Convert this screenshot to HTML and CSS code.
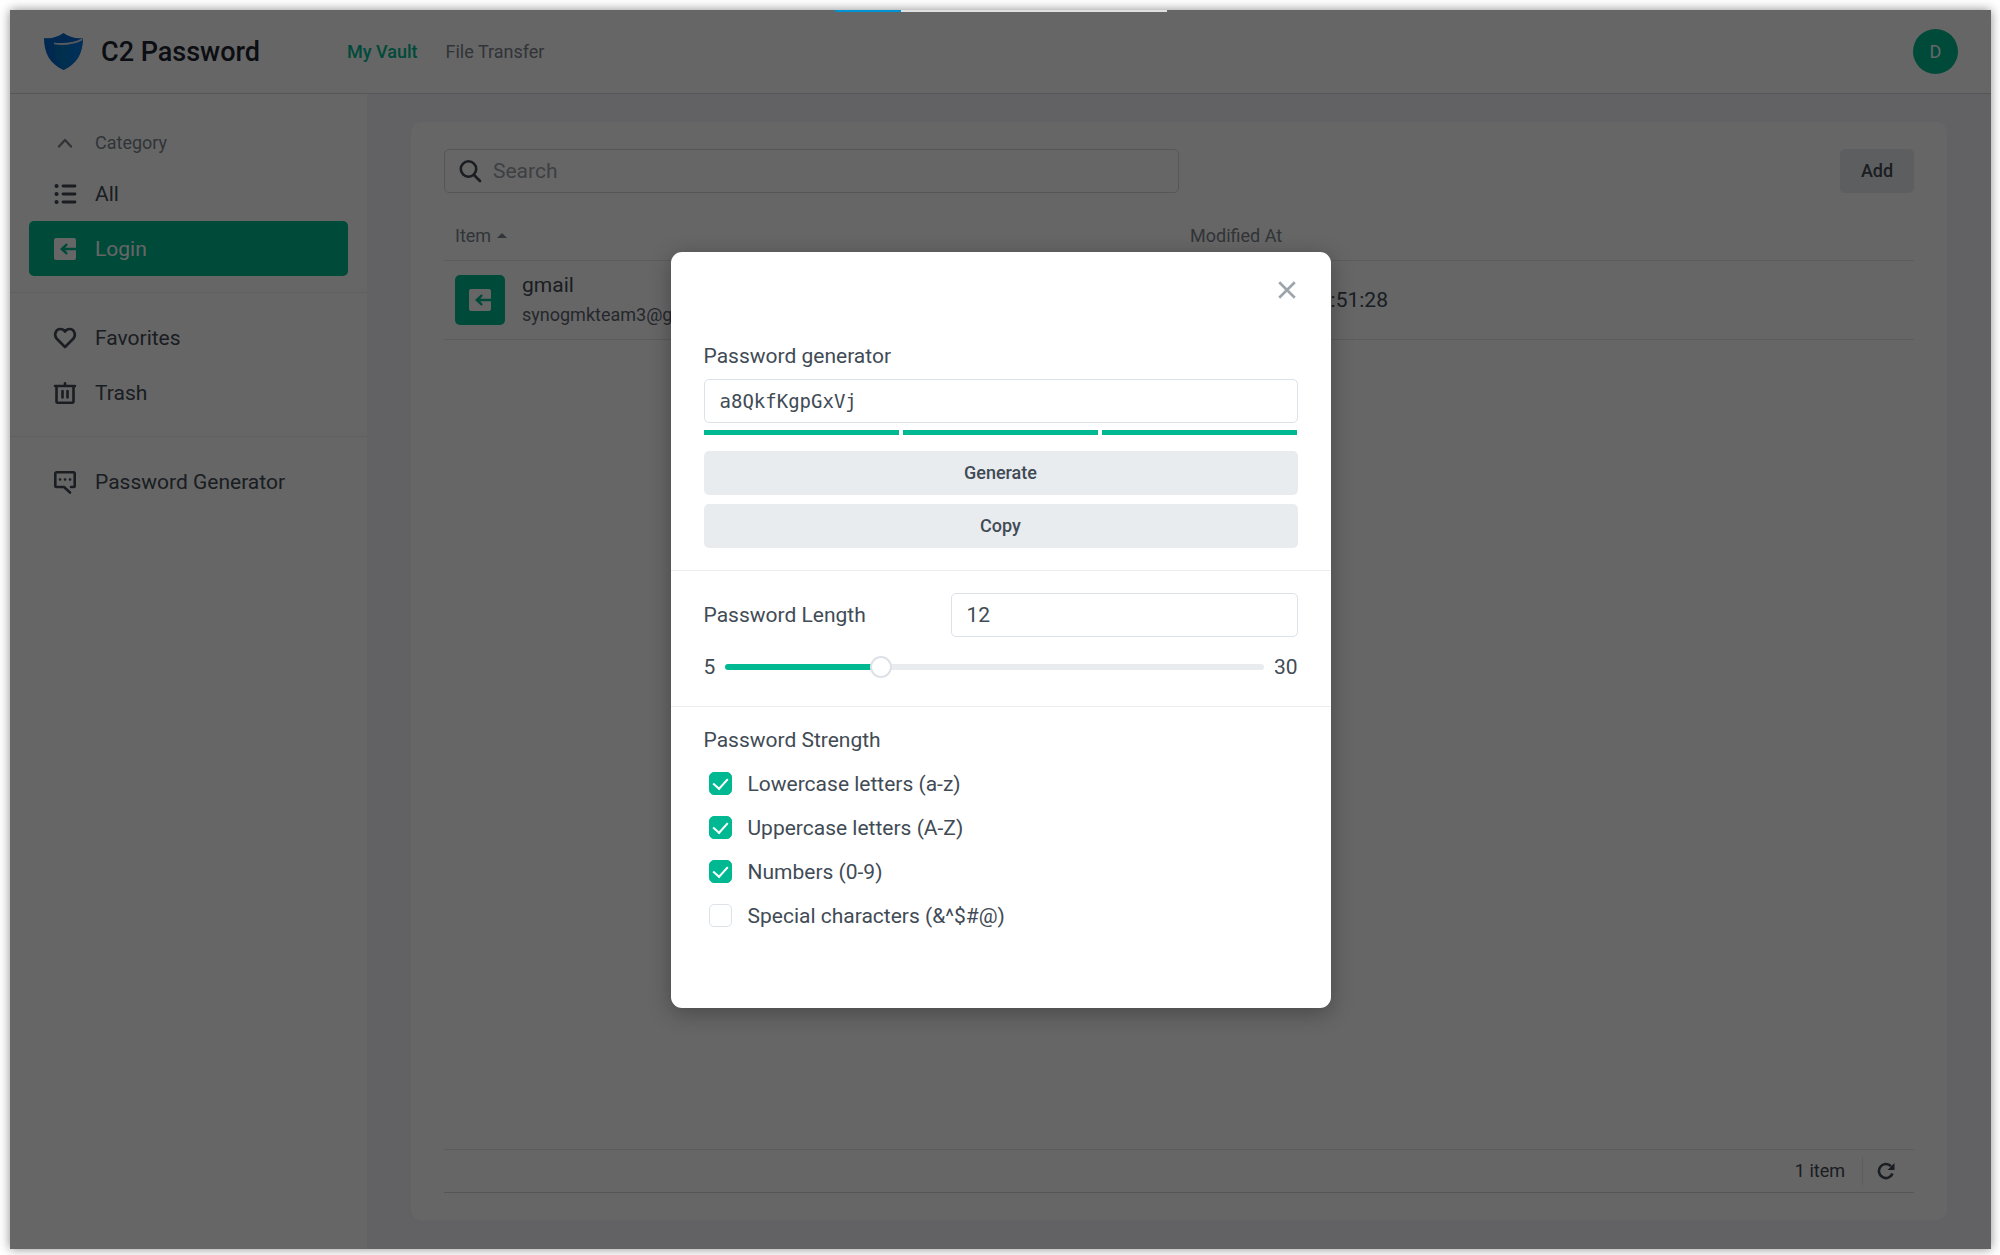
FILE: index.html
```html
<!DOCTYPE html>
<html lang="en">
<head>
    <meta charset="UTF-8">
    <meta name="viewport" content="width=device-width, initial-scale=1.0">
    <title>C2 Password</title>
    <link rel="stylesheet" href="styles.css">
</head>
<body>
    <svg class="sprite" aria-hidden="true">
        <symbol id="login-icon" viewBox="0 0 22 22">
            <path fill="currentColor" d="M2 0h18a2 2 0 0 1 2 2v7.800H11.200l2-2.200a1.200 1.200 0 0 0-1.800-1.700L6 11l5.400 5.100a1.200 1.200 0 0 0 1.800-1.700l-2-2.200H22V20a2 2 0 0 1-2 2H2a2 2 0 0 1-2-2V2a2 2 0 0 1 2-2z"/>
        </symbol>
    </svg>

    <div class="window">
        <header class="header">
            <svg class="logo" viewBox="0 0 39 37" aria-hidden="true">
                <defs>
                    <linearGradient id="shield" x1="0" y1="0" x2="1" y2="0">
                        <stop offset="0" stop-color="#0074b8"/>
                        <stop offset="1" stop-color="#0078e6"/>
                    </linearGradient>
                </defs>
                <path fill="#0064c8" d="M0 5c7 1 14-1 19.500-5C25 4 32 6 39 5c0 15-6 26-19.500 32C6 31 0 20 0 5z"/>
                <path fill="url(#shield)" d="M10 11.500c11 1 20 0 28.500-3.500C37.500 21 32 31 19.500 37 13 30 10 22 10 11.500z"/>
                <path fill="#d5e4f2" d="M10 9.800c11 .8 20 0 28.800-4.800L38 7.500c-8 4-18 5.300-28 3.800z"/>
            </svg>
            <h1>C2 Password</h1>
            <nav class="tabs">
                <a class="tab active" href="#">My Vault</a>
                <a class="tab" href="#">File Transfer</a>
            </nav>
            <button class="avatar" type="button">D</button>
        </header>

        <div class="layout">
            <aside class="sidebar">
                <button class="category" type="button">
                    <svg class="icon" viewBox="0 0 22 22" aria-hidden="true"><path d="M5 14.500L11 8l6 6.500" stroke-width="2.400"/></svg>
                    Category
                </button>
                <nav class="menu">
                    <a class="menu-item" href="#">
                        <svg class="icon" viewBox="0 0 22 22" aria-hidden="true"><path d="M9 3h12M9 11h12M9 19h12" stroke-width="2.800"/><path d="M2.500 3h.1M2.500 11h.1M2.500 19h.1" stroke-width="4"/></svg>
                        All
                    </a>
                    <a class="menu-item selected" href="#">
                        <svg class="icon" aria-hidden="true"><use href="#login-icon"/></svg>
                        Login
                    </a>
                </nav>
                <nav class="menu">
                    <a class="menu-item" href="#">
                        <svg class="icon" viewBox="0 0 22 22" aria-hidden="true"><path d="M11 20L2.500 11.500C-.5 7.500 2 2 6.300 2 8.500 2 10 3 11 4.600 12 3 13.500 2 15.700 2 20 2 22.500 7.500 19.500 11.500z"/></svg>
                        Favorites
                    </a>
                    <a class="menu-item" href="#">
                        <svg class="icon" viewBox="0 0 22 22" aria-hidden="true"><path d="M1 4h20M11 1.200V4M2.500 4v15.500a1.200 1.200 0 0 0 1.200 1.200h14.600a1.200 1.200 0 0 0 1.200-1.200V4M8.500 9v6.500M13.500 9v6.500"/></svg>
                        Trash
                    </a>
                </nav>
                <nav class="menu">
                    <a class="menu-item" href="#">
                        <svg class="icon" viewBox="0 0 22 22" aria-hidden="true"><path d="M17 16h2.500a1.200 1.200 0 0 0 1.200-1.200V2.500a1.200 1.200 0 0 0-1.200-1.200h-17a1.200 1.200 0 0 0-1.200 1.200v12.300A1.200 1.200 0 0 0 2.500 16H10l6 5.500"/><path d="M6 8.500h.1M11 8.500h.1M16 8.500h.1"/></svg>
                        Password Generator
                    </a>
                </nav>
            </aside>

            <main class="main">
                <section class="card">
                    <div class="toolbar">
                        <label class="search">
                            <svg class="icon" viewBox="0 0 22 22" aria-hidden="true"><circle cx="9.500" cy="9" r="7.700"/><path d="M15 15l6 6"/></svg>
                            <input type="text" placeholder="Search" aria-label="Search">
                        </label>
                        <button class="button add" type="button">Add</button>
                    </div>
                    <div class="items">
                        <table>
                            <thead>
                                <tr>
                                    <th>Item <span class="sort"></span></th>
                                    <th>Modified At</th>
                                </tr>
                            </thead>
                            <tbody>
                                <tr>
                                    <td>
                                        <div class="entry">
                                            <span class="entry-icon"><svg class="icon" aria-hidden="true"><use href="#login-icon"/></svg></span>
                                            <div>
                                                <div class="entry-name">gmail</div>
                                                <div class="entry-user">synogmkteam3@gmail.com</div>
                                            </div>
                                        </div>
                                    </td>
                                    <td>2021/07/06 14:51:28</td>
                                </tr>
                            </tbody>
                        </table>
                    </div>
                    <footer class="status">
                        <span class="count">1 item</span>
                        <button class="refresh" type="button" aria-label="Refresh">
                            <svg viewBox="0 0 18 18" aria-hidden="true"><path d="M15.500 11.500A7 7 0 1 1 14 4.200" fill="none" stroke="currentColor" stroke-width="2.600"/><path d="M17.500 1v7h-7z" fill="currentColor"/></svg>
                        </button>
                    </footer>
                </section>
            </main>
        </div>

        <div class="overlay">
            <form class="modal" role="dialog" aria-label="Password generator">
                <button class="close" type="button" aria-label="Close">
                    <svg viewBox="0 0 18 18" aria-hidden="true"><path d="M2 2l14 14M16 2L2 16"/></svg>
                </button>
                <section class="modal-section generator">
                    <label for="password">Password generator</label>
                    <input class="field mono" type="text" id="password" value="a8QkfKgpGxVj" spellcheck="false">
                    <div class="meter"><span></span><span></span><span></span></div>
                    <button class="button" type="button">Generate</button>
                    <button class="button" type="button">Copy</button>
                </section>
                <section class="modal-section length">
                    <div class="length-row">
                        <label for="length">Password Length</label>
                        <input class="field" type="text" id="length" value="12">
                    </div>
                    <div class="slider-row">
                        <span>5</span>
                        <input class="slider" type="range" min="5" max="30" value="12" aria-label="Password Length" style="--fill: 29%">
                        <span>30</span>
                    </div>
                </section>
                <section class="modal-section strength">
                    <h2>Password Strength</h2>
                    <label class="option"><input type="checkbox" checked> Lowercase letters (a-z)</label>
                    <label class="option"><input type="checkbox" checked> Uppercase letters (A-Z)</label>
                    <label class="option"><input type="checkbox" checked> Numbers (0-9)</label>
                    <label class="option"><input type="checkbox"> Special characters (&amp;^$#@)</label>
                </section>
            </form>
        </div>

        <div class="loading"></div>
    </div>
</body>
</html>
```

FILE: styles.css
```css
* {
    box-sizing: border-box;
}
body {
    margin: 0;
    height: 100vh;
    padding: 10px 9px 6px 10px;
    display: flex;
    background: #fff;
    color: #414b55;
    font-family: Roboto, sans-serif;
    font-size: 21px;
    line-height: 28px;
}
h1, h2 {
    margin: 0;
}
a {
    color: inherit;
    text-decoration: none;
}
button, input {
    font: inherit;
    color: inherit;
}
button {
    border: none;
    background: none;
    padding: 0;
    cursor: pointer;
}
.sprite {
    position: absolute;
    width: 0;
    height: 0;
}
.window {
    position: relative;
    flex: 1;
    display: flex;
    flex-direction: column;
    min-width: 0;
    background: #fff;
    box-shadow: 0 0 10px rgba(0, 0, 0, 0.45);
}
.icon {
    width: 22px;
    height: 22px;
    flex: none;
    fill: none;
    stroke: currentColor;
    stroke-width: 2.6;
    stroke-linecap: round;
    stroke-linejoin: round;
    overflow: visible;
}
.icon use {
    stroke: none;
}

/* header */
.header {
    display: flex;
    align-items: center;
    height: 84px;
    padding: 0 33px 0 34px;
    border-bottom: 1px solid #d2d7dd;
}
.logo {
    width: 39px;
    height: 37px;
}
.header h1 {
    margin-left: 18px;
    color: #1c2530;
    font-size: 27px;
    font-weight: 500;
}
.tabs {
    display: flex;
    gap: 28px;
    margin-left: 87px;
    font-size: 18px;
    color: #7b838c;
}
.tab.active {
    color: #00b992;
    font-weight: 500;
}
.avatar {
    width: 45px;
    height: 45px;
    margin-left: auto;
    border-radius: 50%;
    background: #00b992;
    color: #fff;
    font-size: 18px;
}

/* sidebar */
.layout {
    flex: 1;
    display: flex;
    min-height: 0;
}
.sidebar {
    width: 357px;
    flex: none;
    padding-top: 26px;
}
.category, .menu-item {
    display: flex;
    align-items: center;
    gap: 19px;
    padding: 0 25px;
}
.category {
    height: 46px;
    margin-left: 19px;
    font-size: 18px;
    color: #7b838c;
}
.menu {
    padding: 0 19px 16px;
    border-bottom: 1px solid #ebeef1;
}
.menu + .menu {
    padding-top: 17px;
}
.menu:last-child {
    border-bottom: none;
}
.menu-item {
    height: 55px;
    border-radius: 5px;
}
.menu-item.selected {
    background: #00b992;
    color: #fff;
}

/* item list */
.main {
    flex: 1;
    min-width: 0;
    display: flex;
    padding: 28px 44px 29px;
    background: #f4f6fa;
}
.card {
    flex: 1;
    min-width: 0;
    display: flex;
    flex-direction: column;
    padding: 27px 33px;
    border-radius: 11px;
    background: #fff;
}
.toolbar {
    display: flex;
    justify-content: space-between;
}
.search {
    width: 50%;
    height: 44px;
    display: flex;
    align-items: center;
    gap: 12px;
    padding: 0 14px;
    border: 1px solid #d2d7dd;
    border-radius: 5px;
}
.search input {
    flex: 1;
    min-width: 0;
    border: none;
    padding: 0;
    background: none;
}
.search input::placeholder {
    color: #9ba1a8;
}
.button {
    height: 44px;
    border-radius: 5px;
    background: #e9ecef;
    font-size: 18px;
    font-weight: 500;
}
.add {
    width: 74px;
}
.items {
    flex: 1;
    padding-top: 20px;
}
table {
    width: 100%;
    border-collapse: collapse;
    table-layout: fixed;
}
th, td {
    padding: 0 11px;
    border-bottom: 1px solid #e1e5e9;
    text-align: left;
}
th {
    height: 47px;
    color: #7b838c;
    font-size: 18px;
    font-weight: 400;
}
td {
    height: 79px;
}
.sort {
    display: inline-block;
    margin-left: 1px;
    vertical-align: 4px;
    border: 5px solid transparent;
    border-top: none;
    border-bottom-color: #7b838c;
}
.entry {
    display: flex;
    align-items: center;
    gap: 17px;
}
.entry-icon {
    display: flex;
    align-items: center;
    justify-content: center;
    width: 50px;
    height: 50px;
    border-radius: 5px;
    background: #00b992;
    color: #fff;
}
.entry-user {
    padding-top: 2px;
    color: #5b656f;
    font-size: 18px;
}
.status {
    display: flex;
    align-items: center;
    justify-content: flex-end;
    height: 44px;
    border-top: 1px solid #e1e5e9;
    border-bottom: 1px solid #d2d7dd;
    font-size: 18px;
}
.refresh {
    display: flex;
    align-items: center;
    height: 28px;
    margin-left: 17px;
    padding: 0 19px 0 14px;
    border-left: 1px solid #e1e5e9;
}
.refresh svg {
    width: 18px;
    height: 18px;
}

/* password generator dialog */
.overlay {
    position: absolute;
    inset: 0;
    display: flex;
    align-items: center;
    justify-content: center;
    background: rgba(0, 0, 0, 0.6);
}
.modal {
    display: flex;
    flex-direction: column;
    width: 660px;
    max-width: 100%;
    padding: 27px 0 48px;
    border-radius: 11px;
    background: #fff;
    box-shadow: 0 5px 22px rgba(0, 0, 0, 0.3);
}
.close {
    display: flex;
    align-self: flex-end;
    margin-right: 33px;
    padding: 1px;
    color: #9ca4ac;
}
.close svg {
    width: 20px;
    height: 20px;
    fill: none;
    stroke: currentColor;
    stroke-width: 2.4;
}
.modal-section {
    padding: 22px 33px;
    border-bottom: 1px solid #ebeef1;
}
.modal-section:last-child {
    border-bottom: none;
}
.field {
    width: 100%;
    height: 44px;
    padding: 0 15px;
    border: 1px solid #dde2e8;
    border-radius: 5px;
    background: #fff;
}
.mono {
    font-family: "DejaVu Sans Mono", monospace;
    font-size: 19px;
}
.generator {
    display: flex;
    flex-direction: column;
    padding-top: 41px;
}
.generator .field {
    margin-top: 9px;
}
.generator .button + .button {
    margin-top: 9px;
}
.meter {
    display: flex;
    gap: 4px;
    margin: 7px 0 16px;
}
.meter span {
    flex: 1;
    height: 5px;
    background: #00b992;
}
.length-row {
    display: flex;
    align-items: center;
    justify-content: space-between;
}
.length-row .field {
    width: 347px;
}
.slider-row {
    display: flex;
    align-items: center;
    gap: 10px;
    margin: 16px 0 3px;
}
.slider {
    flex: 1;
    min-width: 0;
    height: 6px;
    margin: 0;
    border-radius: 3px;
    appearance: none;
    background: linear-gradient(to right, #00b992 var(--fill), #e9ecef var(--fill));
}
.slider::-webkit-slider-thumb {
    appearance: none;
    width: 22px;
    height: 22px;
    border: 2px solid #dde2e8;
    border-radius: 50%;
    background: #fff;
}
.strength {
    padding-top: 19px;
}
.strength h2 {
    margin-bottom: 8px;
    font-size: 21px;
    font-weight: 400;
    line-height: 28px;
}
.option {
    display: flex;
    align-items: center;
    gap: 16px;
    height: 44px;
    padding-left: 5px;
}
.option input {
    display: flex;
    align-items: center;
    justify-content: center;
    width: 23px;
    height: 23px;
    margin: 0;
    border: 1px solid #dde2e8;
    border-radius: 5px;
    appearance: none;
}
.option input:checked {
    border-color: #00b992;
    background: #00b992;
}
.option input:checked::before {
    content: "";
    width: 7px;
    height: 12px;
    margin-bottom: 4px;
    border: solid #fff;
    border-width: 0 2px 2px 0;
    transform: rotate(42deg);
}

/* progress strip on the top edge */
.loading {
    position: absolute;
    top: 0;
    left: 825px;
    width: 332px;
    height: 2px;
    background: linear-gradient(to right, #0093d4 20%, #e0e0e0 20%);
}
```
